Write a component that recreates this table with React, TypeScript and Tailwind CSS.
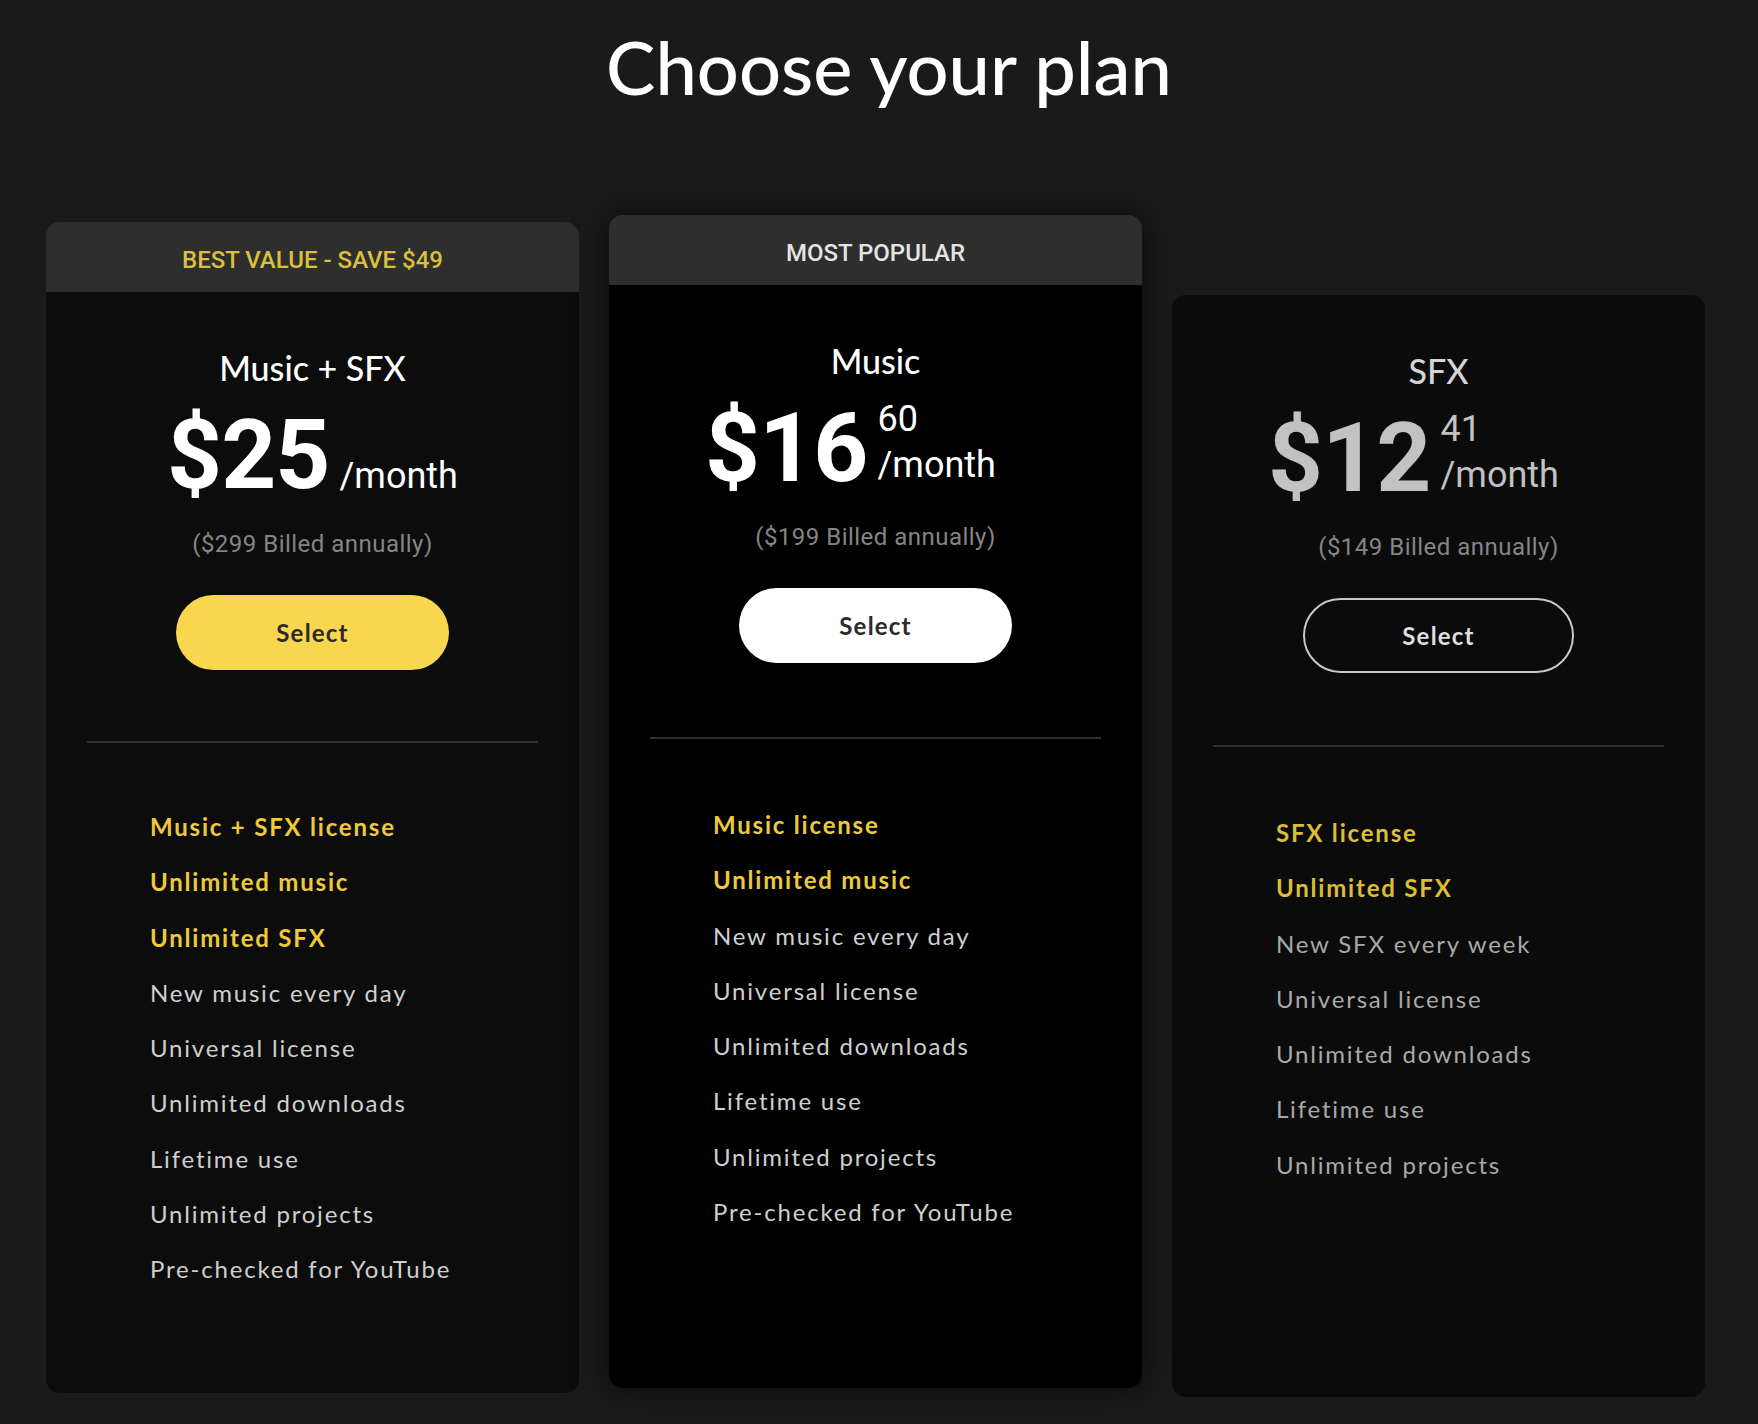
import React from "react";

type Plan = {
  name: string;
  badge?: string;
  badgeTone?: "gold" | "light";
  whole: string;
  cents?: string;
  billed: string;
  variant: "gold" | "white" | "outline";
  highlights: string[];
  features: string[];
  dim?: boolean;
};

const plans: Plan[] = [
  {
    name: "Music + SFX",
    badge: "BEST VALUE - SAVE $49",
    badgeTone: "gold",
    whole: "$25",
    billed: "($299 Billed annually)",
    variant: "gold",
    highlights: ["Music + SFX license", "Unlimited music", "Unlimited SFX"],
    features: [
      "New music every day",
      "Universal license",
      "Unlimited downloads",
      "Lifetime use",
      "Unlimited projects",
      "Pre-checked for YouTube",
    ],
  },
  {
    name: "Music",
    badge: "MOST POPULAR",
    badgeTone: "light",
    whole: "$16",
    cents: "60",
    billed: "($199 Billed annually)",
    variant: "white",
    highlights: ["Music license", "Unlimited music"],
    features: [
      "New music every day",
      "Universal license",
      "Unlimited downloads",
      "Lifetime use",
      "Unlimited projects",
      "Pre-checked for YouTube",
    ],
  },
  {
    name: "SFX",
    whole: "$12",
    cents: "41",
    billed: "($149 Billed annually)",
    variant: "outline",
    highlights: ["SFX license", "Unlimited SFX"],
    features: [
      "New SFX every week",
      "Universal license",
      "Unlimited downloads",
      "Lifetime use",
      "Unlimited projects",
    ],
    dim: true,
  },
];

const roboto = { fontFamily: "Roboto, 'Liberation Sans', sans-serif" };
const lato = { fontFamily: "Lato, 'Open Sans', sans-serif" };

const SelectButton = ({ variant }: { variant: Plan["variant"] }) => {
  const base = "mt-[36px] h-[75px] rounded-full text-[24px] font-bold tracking-[0.05em]";
  if (variant === "gold") {
    return <button className={`${base} w-[273px] bg-[#f9d64f] text-[#2a2a2a]`}>Select</button>;
  }
  if (variant === "white") {
    return <button className={`${base} w-[273px] bg-white text-[#2a2a2a]`}>Select</button>;
  }
  return (
    <button className={`${base} w-[271px] border-2 border-[#c9c9c9] bg-transparent text-[#dedede]`}>
      Select
    </button>
  );
};

type CardProps = {
  plan: Plan;
  top: string;
  body: string;
  height: string;
  rule: string;
  list: string;
};

const PlanCard = ({ plan, top, body, height, rule, list }: CardProps) => {
  const priceColor = plan.dim ? "text-[#c2c2c2]" : "text-white";
  const nameColor = plan.dim ? "text-[#d4d4d4]" : "text-white";
  const gold = plan.dim ? "text-[#dcbd36]" : "text-[#ecca3c]";
  const grey = plan.dim ? "text-[#a9a9a9]" : "text-[#cfcfcf]";

  return (
    <div
      className={`flex w-[533px] flex-col ${top} ${
        plan.badgeTone === "light" ? "rounded-[14px] shadow-[0_0_28px_10px_rgba(0,0,0,0.35)]" : ""
      }`}
    >
      {plan.badge && (
        <div
          style={roboto}
          className={`flex h-[70px] items-center justify-center rounded-t-[14px] bg-[#2e2e2e] pt-[5px] text-[24px] font-medium ${
            plan.badgeTone === "gold" ? "text-[#dcbf3c]" : "text-[#e4e4e4]"
          }`}
        >
          {plan.badge}
        </div>
      )}
      <div
        className={`flex flex-col items-center px-[41px] ${height} ${body} ${
          plan.badge ? "rounded-b-[14px]" : "rounded-[14px]"
        }`}
        style={lato}
      >
        <div className={`mt-[56px] text-[34px] leading-[40px] font-medium ${nameColor}`}>{plan.name}</div>

        <div
          style={roboto}
          className={`mt-[19px] flex items-end ${priceColor} ${plan.cents ? "pr-[50px]" : ""}`}
        >
          <span className="text-[96px] leading-[96px] font-bold tracking-[-0.01em]">{plan.whole}</span>
          {plan.cents ? (
            <span className="ml-[10px] mb-[13px] flex flex-col items-start">
              <span className="text-[36px] leading-[36px]">{plan.cents}</span>
              <span className="mt-[10px] text-[36px] leading-[36px]">/month</span>
            </span>
          ) : (
            <span className="ml-[10px] mb-[9px] text-[36px] leading-[36px]">/month</span>
          )}
        </div>

        <div style={roboto} className="mt-[26px] text-[24px] leading-[30px] tracking-[0.02em] text-[#858585]">
          {plan.billed}
        </div>

        <SelectButton variant={plan.variant} />

        <div className={`h-[2px] w-full bg-[#2f2f2f] ${rule}`} />

        <ul className={`w-full pl-[63px] text-[24px] tracking-[0.075em] ${list}`}>
          {plan.highlights.map((h) => (
            <li key={h} className={`h-[55.3px] leading-[55.3px] font-bold ${gold}`}>
              {h}
            </li>
          ))}
          {plan.features.map((f) => (
            <li key={f} className={`h-[55.3px] leading-[55.3px] ${grey}`}>
              {f}
            </li>
          ))}
        </ul>
      </div>
    </div>
  );
};

const App = () => {
  return (
    <div className="min-h-[1424px] w-full overflow-hidden bg-[#1a1a1a]">
      <h1
        style={lato}
        className="pt-[22px] pl-[20px] text-center text-[74px] leading-[90px] font-medium text-white"
      >
        Choose your plan
      </h1>
      <div className="flex items-start gap-[30px] pl-[46px]">
        <PlanCard
          plan={plans[0]}
          top="mt-[110px]"
          body="bg-[#0c0c0c]"
          height="h-[1101px]"
          rule="mt-[71px]"
          list="mt-[56px]"
        />
        <PlanCard
          plan={plans[1]}
          top="mt-[103px]"
          body="bg-black"
          height="h-[1103px]"
          rule="mt-[74px]"
          list="mt-[58px]"
        />
        <PlanCard
          plan={plans[2]}
          top="mt-[183px]"
          body="bg-[#0b0b0b]"
          height="h-[1102px]"
          rule="mt-[72px]"
          list="mt-[58px]"
        />
      </div>
    </div>
  );
};

export default App;
